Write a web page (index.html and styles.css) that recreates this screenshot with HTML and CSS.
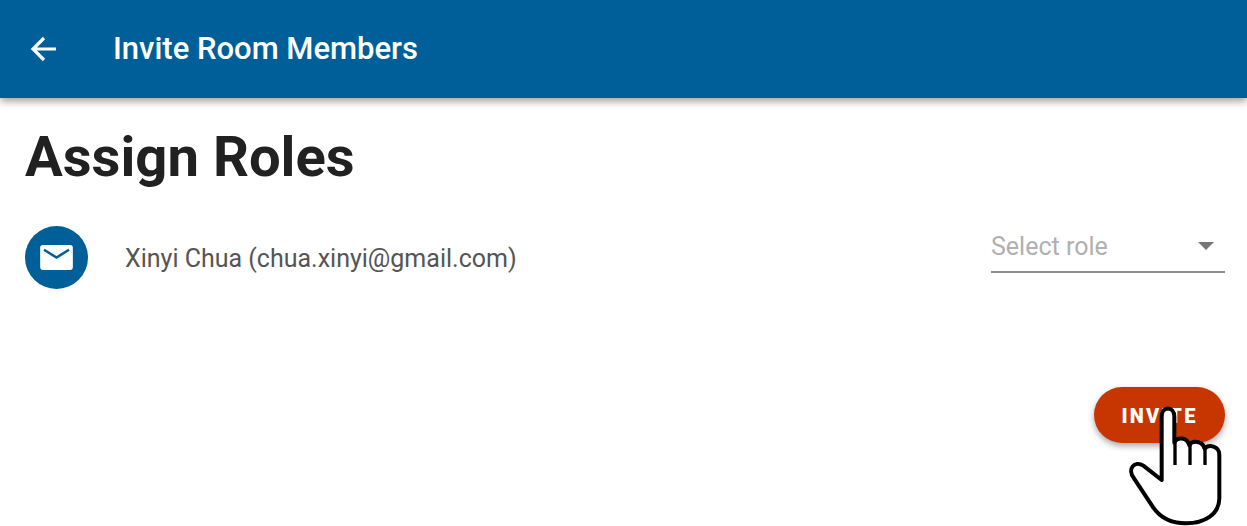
FILE: index.html
```html
<!DOCTYPE html>
<html lang="en">
<head>
    <meta charset="UTF-8">
    <title>Invite Room Members</title>
    <link rel="stylesheet" href="styles.css">
</head>
<body>

<header class="topbar">
    <svg class="topbar__back" viewBox="0 0 30 30" aria-hidden="true">
        <path d="M27 15H4M15 4L4 15l11 11" fill="none" stroke="#fff" stroke-width="3.2"/>
    </svg>
    <span class="topbar__title">Invite Room Members</span>
</header>

<main class="content">
    <h1 class="content__title">Assign Roles</h1>

    <div class="member">
        <div class="member__avatar">
            <svg viewBox="0 0 34 26" aria-hidden="true">
                <rect width="34" height="26" rx="3" fill="#fff"/>
                <path d="M4 5l13 8 13-8" fill="none" stroke="#005f99" stroke-width="2.6"/>
            </svg>
        </div>
        <span class="member__name">Xinyi Chua (chua.xinyi@gmail.com)</span>
        <div class="member__select">
            <span>Select role</span>
            <i class="member__caret"></i>
        </div>
    </div>

    <div class="actions">
        <div class="actions__wrap">
            <button class="actions__invite">INVITE</button>
            <svg class="actions__hand" viewBox="0 0 561 468" aria-hidden="true">
                <path d="M305 330V140c0-33 38-33 38 0v78c8-18 38-18 45 8 8-16 40-14 46 10 12-14 44-8 44 18v130c0 50-45 76-100 76-50 0-80-20-100-50l-56-85c-22-28 2-55 28-38z" fill="#fff" stroke="#000" stroke-width="12" stroke-linejoin="round"/>
                <path d="M345 215v70M390 225v60M435 235v50" fill="none" stroke="#000" stroke-width="10"/>
            </svg>
        </div>
    </div>
</main>

</body>
</html>
```

FILE: styles.css
```css
* {
    box-sizing: border-box;
}
html, body {
    height: 100%;
}
body {
    margin: 0;
    background: #fff;
    font-family: 'Roboto', sans-serif;
    overflow: hidden;
}

/* Top bar */
.topbar {
    display: flex;
    align-items: center;
    height: 98px;
    padding-left: 29px;
    background: #005f99;
    color: #fff;
    box-shadow: 0 3px 8px rgba(0, 0, 0, 0.4);
}
.topbar__back {
    width: 30px;
    height: 30px;
}
.topbar__title {
    margin-left: 54px;
    margin-top: -2px;
    font-size: 31px;
    font-weight: 500;
}

/* Content */
.content {
    padding: 0 22px 0 25px;
}
.content__title {
    margin: 24px 0 0;
    font-size: 56.2px;
    line-height: 70px;
    font-weight: 700;
    color: #212121;
}
.member {
    display: flex;
    align-items: center;
    margin-top: 34px;
    height: 63px;
    color: #555;
    font-size: 25px;
}
.member__avatar {
    display: flex;
    align-items: center;
    justify-content: center;
    width: 63px;
    height: 63px;
    border-radius: 50%;
    background: #005f99;
}
.member__avatar svg {
    width: 33px;
    height: 25px;
}
.member__name {
    margin-left: 37px;
    padding-top: 2px;
}
.member__select {
    display: flex;
    align-items: center;
    justify-content: space-between;
    align-self: flex-start;
    width: 234px;
    height: 47px;
    margin-left: auto;
    padding-right: 11px;
    padding-bottom: 5px;
    border-bottom: 2px solid #8e8e8e;
    color: #b0b0b0;
}
.member__caret {
    width: 0;
    height: 0;
    border-left: 8px solid transparent;
    border-right: 8px solid transparent;
    border-top: 8px solid #757575;
}

/* Invite button */
.actions {
    display: flex;
    justify-content: flex-end;
    margin-top: 98px;
}
.actions__wrap {
    position: relative;
}
.actions__invite {
    display: block;
    width: 131px;
    height: 56px;
    padding-top: 2px;
    border: none;
    border-radius: 28px;
    background: #c73500;
    color: #fff;
    font-family: 'Roboto', sans-serif;
    font-size: 20px;
    font-weight: 900;
    letter-spacing: 2.2px;
    box-shadow: 0 3px 6px rgba(0, 0, 0, 0.35);
}
.actions__hand {
    position: absolute;
    left: -34px;
    top: -17px;
    width: 187px;
    height: 156px;
}
```
